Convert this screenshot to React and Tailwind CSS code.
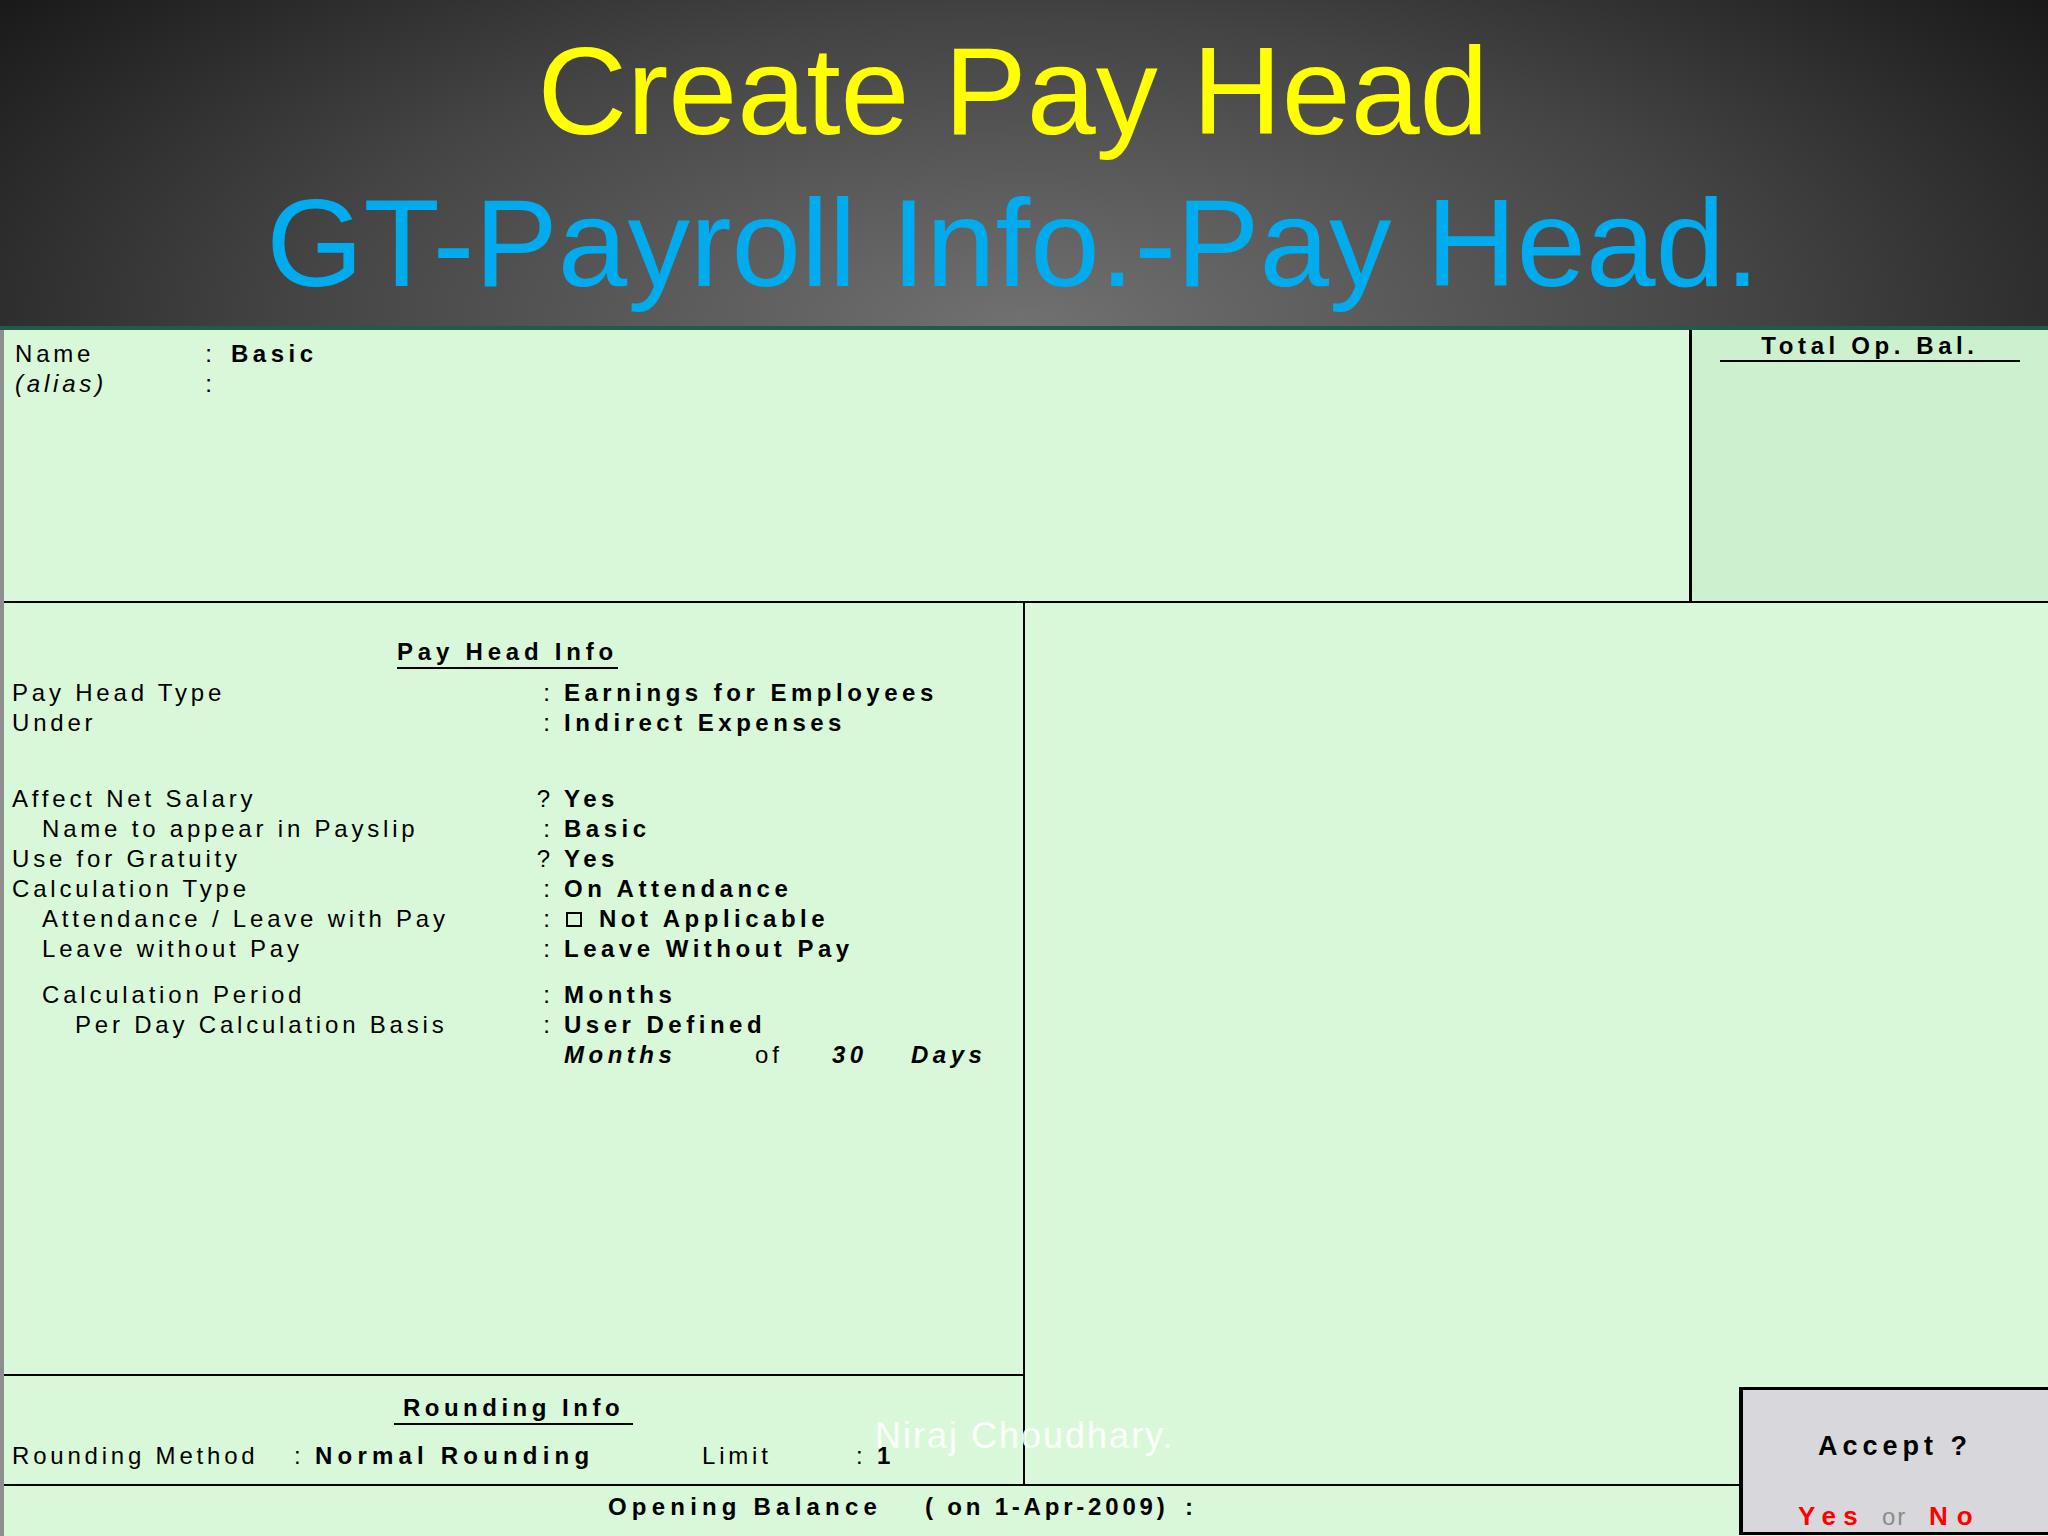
import React from "react";

function Row({ label, sep = ":", value, indent = "", children }) {
  return (
    <div className="grid grid-cols-[518px_20px_1fr] h-[30px] leading-[30px]">
      <div className={`tracking-[3.8px] whitespace-nowrap ${indent}`}>{label}</div>
      <div className="text-right">{sep}</div>
      <div className="pl-[14px] font-bold tracking-[4.5px] whitespace-nowrap">
        {children || value}
      </div>
    </div>
  );
}

export default function App() {
  return (
    <div className="relative w-[2048px] h-[1536px] overflow-hidden font-['Liberation_Sans',Arial,sans-serif] text-black">
      {/* Header */}
      <div className="h-[330px] border-b-[4px] border-[#1d5c4a] pt-[16px] pr-[22px] text-center leading-[151px] whitespace-nowrap bg-[radial-gradient(ellipse_65%_170%_at_50%_100%,#717171_0%,#444444_55%,#161616_100%)]">
        <div className="text-[124px] text-[#ffff00]">Create Pay Head</div>
        <div className="text-[125px] text-[#00acee]">GT-Payroll Info.-Pay Head.</div>
      </div>

      {/* Body */}
      <div className="h-[1206px] flex flex-col bg-[#d9f8d9] border-l-[4px] border-[#8e8e8e] text-[24px]">
        {/* Top section */}
        <div className="h-[273px] flex border-b-[2px] border-black">
          <div className="flex-1 pt-[9px] pl-[11px]">
            <div className="grid grid-cols-[187px_10px_1fr] h-[30px] leading-[30px]">
              <div className="tracking-[3.8px]">Name</div>
              <div className="text-right">:</div>
              <div className="pl-[19px] font-bold tracking-[4.5px]">Basic</div>
            </div>
            <div className="grid grid-cols-[187px_10px_1fr] h-[30px] leading-[30px]">
              <div className="italic tracking-[3.8px]">(alias)</div>
              <div className="text-right">:</div>
              <div></div>
            </div>
          </div>
          <div className="w-[359px] border-l-[3px] border-black bg-[#cdf0ce] pt-[1px]">
            <div className="w-[300px] mx-auto text-center border-b-[2px] border-black leading-[29px] font-bold tracking-[4.6px] whitespace-nowrap">
              Total Op. Bal.
            </div>
          </div>
        </div>

        {/* Middle section */}
        <div className="h-[883px] flex border-b-[2px] border-black">
          <div className="w-[1021px] flex flex-col border-r-[2px] border-black">
            <div className="h-[773px] border-b-[2px] border-black pl-[8px] pt-[34px]">
              <div className="text-center pr-[20px] leading-[30px]">
                <span className="inline-block border-b-[2px] border-black font-bold tracking-[4.8px] leading-[30px]">
                  Pay Head Info
                </span>
              </div>
              <div className="mt-[9px]">
                <Row label="Pay Head Type" value="Earnings for Employees" />
                <Row label="Under" value="Indirect Expenses" />
                <div className="mt-[46px]">
                  <Row label="Affect Net Salary" sep="?" value="Yes" />
                  <Row label="Name to appear in Payslip" indent="pl-[30px]" value="Basic" />
                  <Row label="Use for Gratuity" sep="?" value="Yes" />
                  <Row label="Calculation Type" value="On Attendance" />
                  <Row label="Attendance / Leave with Pay" indent="pl-[30px]">
                    <span className="inline-block w-[16px] h-[15px] border-[2px] border-black ml-[2px] mr-[17px]"></span>
                    Not Applicable
                  </Row>
                  <Row label="Leave without Pay" indent="pl-[30px]" value="Leave Without Pay" />
                </div>
                <div className="mt-[16px]">
                  <Row label="Calculation Period" indent="pl-[30px]" value="Months" />
                  <Row label="Per Day Calculation Basis" indent="pl-[63px]" value="User Defined" />
                  <Row label="" sep="">
                    <span className="inline-block w-[191px] italic">Months</span>
                    <span className="inline-block w-[77px] font-normal tracking-[3.8px]">of</span>
                    <span className="inline-block w-[79px] italic">30</span>
                    <span className="inline-block italic">Days</span>
                  </Row>
                </div>
              </div>
            </div>
            <div className="flex-1 pl-[8px] pt-[17px]">
              <div className="text-center leading-[30px] pr-[8px]">
                <span className="inline-block border-b-[2px] border-black px-[9px] font-bold tracking-[4.5px] leading-[30px]">
                  Rounding Info
                </span>
              </div>
              <div className="mt-[16px] h-[30px] leading-[30px] whitespace-nowrap">
                <span className="inline-block w-[282px] tracking-[3.8px]">Rounding Method</span>
                <span className="inline-block w-[21px]">:</span>
                <span className="inline-block w-[387px] font-bold tracking-[5.2px]">Normal Rounding</span>
                <span className="inline-block w-[154px] tracking-[3.8px]">Limit</span>
                <span className="inline-block w-[21px]">:</span>
                <span className="font-bold">1</span>
              </div>
            </div>
          </div>
          <div className="flex-1"></div>
        </div>

        {/* Bottom section */}
        <div className="flex-1 pl-[604px] pt-[6px] leading-[30px] whitespace-nowrap font-bold">
          <span className="inline-block w-[317px] tracking-[5.2px]">Opening Balance</span>
          <span className="inline-block w-[260px] tracking-[3.8px]">( on 1-Apr-2009)</span>
          <span>:</span>
        </div>
      </div>

      {/* Watermark */}
      <div className="absolute left-[875px] top-[1418px] text-[36px] leading-[36px] tracking-[2px] text-white/90 whitespace-nowrap">
        Niraj Choudhary.
      </div>

      {/* Accept dialog */}
      <div className="absolute left-[1739px] top-[1387px] right-[-6px] h-[148px] border-[3px] border-l-[4px] border-black bg-[#d8d8dc] pl-[75px]">
        <div className="pt-[41px] text-[27px] leading-[30px] font-bold tracking-[5px] whitespace-nowrap">
          Accept ?
        </div>
        <div className="mt-[40px] ml-[-20px] text-[26px] leading-[30px] whitespace-nowrap">
          <span className="inline-block w-[84px] font-bold text-[#ff0000] tracking-[7.5px]">Yes</span>
          <span className="inline-block w-[47px] text-[24px] text-[#8a8a8a] tracking-[2px]">or</span>
          <span className="inline-block font-bold text-[#ff0000] tracking-[9px]">No</span>
        </div>
      </div>
    </div>
  );
}
